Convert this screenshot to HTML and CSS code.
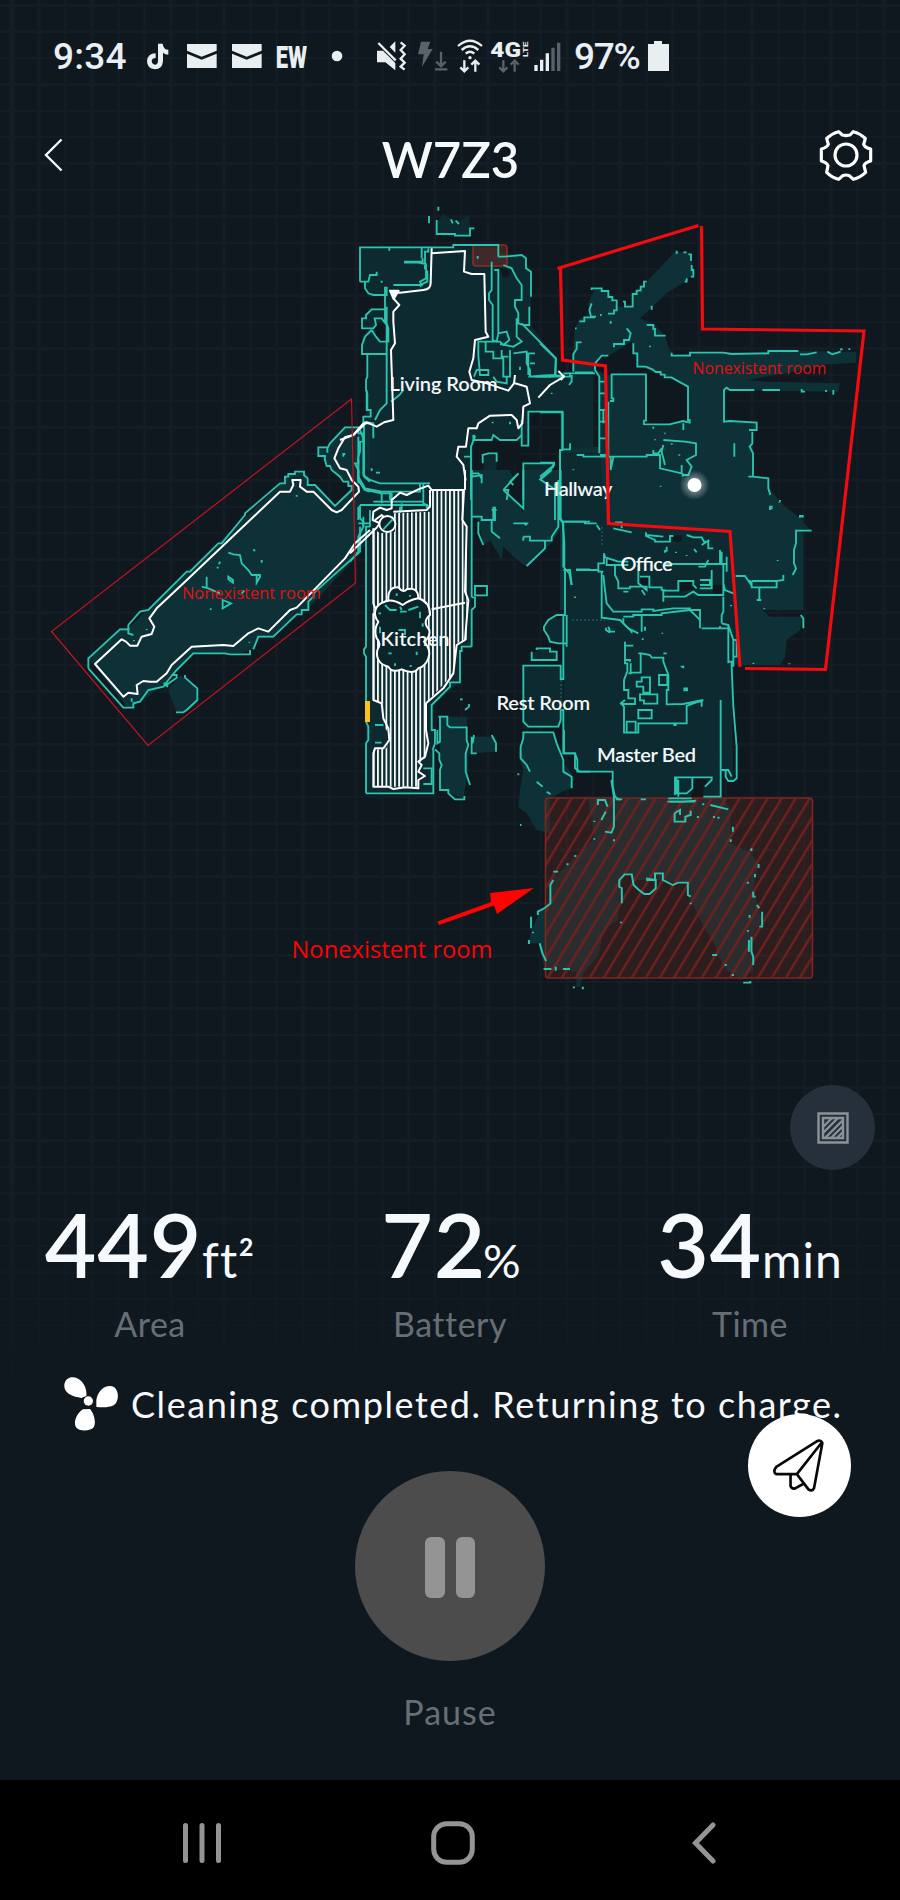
FILE: index.html
```html
<!DOCTYPE html>
<html lang="en">
<head>
<meta charset="utf-8">
<title>W7Z3</title>
<link rel="stylesheet" href="styles.css">
</head>
<body>
<div class="app">
  <div class="statusbar">
    <span class="clock">9:34</span>
    <svg class="notif" viewBox="420 90 630 150">
      <g class="lit">
        <path d="M474 128h14q2 18 17 18v15q-10 0-16-6v26q-2 24-24 24-24-2-24-25 2-22 26-23v14q-11 0-12 10 1 9 10 10 9-1 9-12z"/>
        <path d="M561 129h89v20l-45 18-44-18zM561 158l44 18 45-18v43h-89z"/>
        <path d="M696 129h89v20l-45 18-44-18zM696 158l44 18 45-18v43h-89z"/>
        <text class="ew" x="827" y="200" textLength="94" lengthAdjust="spacingAndGlyphs">EW</text>
        <circle cx="1011" cy="165" r="16"/>
      </g>
    </svg>
    <svg class="radio" viewBox="1120 90 600 150">
      <g class="lit">
        <path d="M1132 149h18l37 37v22l-30-24h-25zM1187 121v34l-17-17z"/>
        <path class="lit-line" d="M1136 126l52 52M1203 124l12 10-12 13 12 13-12 13 12 12-12 12 12 9"/>
      </g>
      <path class="dim" d="M1264 122h28l-8 22h15l-32 54 5-38h-17z"/>
      <path class="dim-line" d="M1324 152v44M1310 182l14 14 14-14M1306 205h37"/>
      <path class="lit-line" d="M1375 135q36-32 72 0M1386 147q25-22 50 0M1398 158q13-11 26 0M1394 178v32M1382 199l12 12 12-12M1427 212v-32M1415 191l12-12 12 12"/>
      <circle class="lit" cx="1411" cy="170" r="5"/>
      <text class="net" x="1472" y="167" textLength="92" lengthAdjust="spacingAndGlyphs">4G</text>
      <text class="lte" transform="translate(1584 168) rotate(-90)" textLength="46" lengthAdjust="spacingAndGlyphs">LTE</text>
      <path class="dim-line" d="M1511 178v32M1499 199l12 12 12-12M1545 212v-32M1533 191l12-12 12 12"/>
      <path class="lit" d="M1604 192h10v18h-10zM1621 176h10v34h-10zM1638 157h10v53h-10z"/>
      <path class="dim" d="M1655 140h10v70h-10zM1672 125h10v85h-10z"/>
    </svg>
    <span class="percent">97%</span>
    <svg class="battery" viewBox="0 0 21 30"><path class="lit" d="M6 0h8v3h7v27H0V3h6z"/></svg>
  </div>

  <header class="header">
    <svg class="back" viewBox="0 0 20 34"><path d="M17.500 1.500 2 17l15.500 15.500"/></svg>
    <h1 class="title">W7Z3</h1>
    <svg class="gear" viewBox="1107 387 162 162"><path d="M1188 410 1200 408 1210 398Q1230 403 1246 418L1241 436Q1245 446 1262 450V486Q1245 490 1242 500L1247 520Q1230 536 1210 541L1198 530Q1188 526 1178 530L1166 541Q1146 536 1130 520L1134 500Q1130 490 1114 486V450Q1130 446 1135 436L1130 418Q1146 403 1166 398L1177 408Z"/><circle cx="1188" cy="468" r="33"/></svg>
  </header>

  <svg class="map" viewBox="0 200 900 860">
    <defs>
      <pattern id="sweep" width="12.7" height="20" patternUnits="userSpaceOnUse" x="5"><rect width="5.4" height="20" fill="#f4fafa"/></pattern>
      <pattern id="hatch" width="12" height="20" patternUnits="userSpaceOnUse" patternTransform="rotate(31)"><rect width="2.4" height="20" fill="#70211f"/></pattern>
      <radialGradient id="glow"><stop offset=".4" stop-color="#fff" stop-opacity=".4"/><stop offset="1" stop-color="#fff" stop-opacity="0"/></radialGradient>
    </defs>

    <!-- floor areas -->
    <g class="floor-a" transform="translate(340 190) scale(.33333)">
      <path d="M290 132V105L308 70 320 80 360 92 388 72 392 136H345Z"/>
      <path d="M60 172H475V190L500 190 545 195 573 245V350L568 400 648 505V555L690 545 760 545V880H660V665H565V767H545V740L400 750 393 780V930H150L120 905 75 895 50 860 0 780V725L20 710 70 705V680L82 660V495H66V440L90 415H66V385L95 355H135V315H85L75 275H60Z"/>
      <path d="M390 760H470V850L500 930H390ZM550 820H640L600 868 640 895V930H550Z"/>
      <path class="void" d="M105 400H135L145 420V458H120L108 440ZM480 235L515 238 505 262 488 262ZM412 540H445V560H420ZM400 752H540V820H475V795H430V850H400Z"/>
    </g>
    <g class="floor-b" transform="translate(540 210) scale(.33333)">
      <path d="M100 485V400L105 355 120 325 150 320 145 280 165 235 205 245 230 290H280V250L320 215 405 125 450 130 460 190 435 215 380 250 300 325 345 345 375 378 385 410 400 435 450 430 770 423 948 425V458L830 465 780 482 620 510 680 515 900 520 895 545 555 540 550 635 650 638V660L637 665 640 800 685 805 690 850 720 880 790 930V1200H60V720L175 710V485Z"/>
      <path class="void" d="M200 440L275 395 295 470 345 485 445 530V635L390 640 312 650 318 495H205L165 480 180 440Z"/>
    </g>
    <g class="floor-a" transform="translate(550 500) scale(.33333)">
      <path class="floor-b" d="M170 -60H640L690 5 785 92H738L735 210 690 240H600L625 320 660 350 755 350 750 390 710 420 705 470 690 495H570Z"/>
      <path d="M25 -140H150L170 70 540 95 570 490 545 500 550 840H530L515 820V890H195L185 815H80L78 762H42V210L38 130Z"/>
      <path d="M0 355H50V430L0 430ZM0 690L20 720 40 800 65 865 0 880Z"/>
      <path class="void" d="M165 170L205 185 175 195ZM390 240H430L445 265 390 275ZM488 255H525V285H490ZM270 230L298 232V262L275 265ZM430 832H485L460 860V895H425ZM365 108L395 105 395 125H370Z"/>
    </g>
    <g class="floor-b" transform="translate(40 380) scale(.33333)">
      <path d="M145 835L240 745H265L330 680 735 300V285L800 280V310L825 315 885 380 935 325 870 260 835 225 840 200 860 205 915 140H960L990 130V440L960 520 800 690 770 705 700 775H655L640 805 600 820H460L385 900 310 960 265 985Z"/>
      <path d="M385 930L420 885 470 925V970L440 995 410 998Z"/>
    </g>
    <g class="floor-a" transform="translate(350 470) scale(.33333)">
      <path d="M20 0H365V530H330V635L250 705V970H48V170H20Z"/>
      <path class="floor-b" d="M270 740H350L355 900 340 985 270 960ZM370 800H430L438 845 370 850ZM365 0H480L520 100V0H635V170L610 210 585 240 530 290 490 260 460 230 455 270 420 210 400 225 385 150 365 140Z"/>
      <path d="M585 470L600 450H650V520H600ZM545 545H560V535H600L620 550V570H545ZM520 590H640V760L600 775H520Z"/>
      <path class="floor-b" d="M520 790H605L640 880 665 910V950L600 985V1090L560 1080 530 1030 505 1010 510 960 520 900 505 850Z"/>
      <path class="void" d="M460 60L500 10 520 0V130L510 100Z"/>
    </g>
    <g class="floor-b" transform="translate(280 780) scale(.35714 .33333)">
      <path d="M862 53H1240L1262 90 1262 190 1315 215 1340 250 1325 330 1350 420 1320 470 1325 570 1290 600 1245 565 1145 350 1140 310 1050 300 955 300 950 430 905 450 895 520 850 580 840 620 830 620 830 575 740 565 725 490 695 490 705 450 725 400 755 370 762 300 880 175Z"/>
      <path class="void" d="M945 420L955 290 980 285 1005 340 1040 310 1145 320 1150 375 1220 500 1240 600H850L890 540 905 450Z"/>
    </g>

    <!-- no-go zones -->
    <rect x="545.5" y="798" width="267" height="180" rx="3" fill="#57251f" fill-opacity=".4"/>
    <rect x="545.5" y="798" width="267" height="180" rx="3" fill="url(#hatch)" stroke="#80251f" stroke-width="1.600"/>
    <rect x="473" y="245" width="34" height="21" rx="3" fill="#602a26" fill-opacity=".6" stroke="#8e2c20" stroke-width="1.500"/>

    <!-- detected walls -->
    <g class="wall" transform="translate(340 190) scale(.33333)">
      <path d="M290 90V132H345V137H390V115H403M267 78v22M295 50v12M333 88l5 12M347 92l10 10M413 198v8"/>
      <path d="M60 275V172H340V165H475V200M60 275H85L90 255H110V245M75 275V295L85 310 100 315H140V290M148 172v10M125 272v6"/>
      <path d="M245 172V205M248 205V215H195V218H235L258 222V265L240 275 245 285H160M265 175V185H255V235L262 245V275L250 280 240 290"/>
      <path d="M135 358H95L78 375V385H66V415H100L108 405 104 385H125L135 398V290M95 420L75 440 66 465V492H140V350M95 420L108 440 120 455H145V415L140 400M82 495V560L78 570V600L82 610V660H92V680H70V695L100 700V745M140 495V640L120 660 105 690M190 600l-12 15-25 20"/>
      <path d="M475 200H495L545 195 558 205V235L573 245V320M490 225L515 235 530 265 545 285V330H525V350L535 370V400L550 405H568V350M455 215V300L447 310V330L458 345V450L470 455 475 430M463 240H475V430L500 425 508 450 490 465 480 455H415V495L420 555H445V540H410L402 560M437 455V485H460V505H490V560H500V580L470 575 460 560M510 480V560H490M485 480V500H505M545 400L648 505 645 555 565 560M530 385V440L545 455 520 470 480 462M520 490L560 485V520L570 540V560H640M585 490H565V555M585 520H570M540 530v10"/>
      <path d="M400 735V750H455L460 735 480 750H530L545 735V767H565V665H667V780H660V930M545 690V740M458 695v5M510 695v8M585 560H690V548"/>
      <path d="M428 820V795L445 790H470V815M372 800H393V770L405 740 400 735M393 800V930M395 850H415L425 865M640 820H550V930M640 820V830L600 868 640 895M490 900H505L500 930M535 850L510 875 520 885M95 835v8M108 848h12"/>
      <path d="M70 745V855L90 870 120 880H270M55 740V860L75 895 125 905H150V930M60 720L70 745M125 905H240V880"/>
    </g>
    <g class="wall" transform="translate(540 210) scale(.33333)">
      <path d="M410 122v10M430 127h10M445 133h8v20M455 165v15h5v20h-8M440 205v10h-6M320 215h-8v15h-10v12h-12v10h-12v38H255v-15h-6M155 240v-5h30v8h20v18h12v10h13v30h-8v10h-18M155 280l-7 20 5 20h15M165 322h-32v12h-15M180 315h5M212 333v8M335 287v12M105 355h5M320 345h20v12h5v20h32M260 355l12 15-5 20h-15v12h-30v10M125 397h-15v20l-10 15v53M280 400v30h12v40h25l20 8 10 8h15v8h12v8h20l50 28v100h5v8l-20-5-40 10H312V632h6V493H215V565h5v8h-10"/>
      <path d="M205 437H185L165 460V480L178 500V730M70 490H165M105 487H160M95 495V515l-8 10M180 515H200M180 550H200M180 600H200M180 635H200M180 685H200M180 735H200M190 600V640M205 740V575"/>
      <path d="M395 428V437H450V428H550L575 432 685 430V423H775M780 433H800L830 427M862 425l15 8 25-8M900 418h8M928 415v5M643 540H570l-10-7-8 7V635L570 633 650 638V660H627M667 540H720M785 537v8h10M858 540v6M880 540v14"/>
      <path d="M637 665V700l-8 10 10 20v70H625M640 800L685 805V835l6 20M583 700V740M690 900v-10h8M718 875v3M780 915v8M330 407v5M110 735H130V740H320V735H360V775L425 790V765M212 742v38l8-38M340 720v10h15l10-15M370 705L365 725 375 765M370 690L435 695 468 700V735L440 750 455 770 445 795H430M428 800v-10M375 668v3M345 688v3M395 700v4M418 733v4M362 827v3M100 778v3M430 640v20M340 650v6M0 607H68V718H90V700M60 720V930M35 548v4"/>
      <path d="M0 497H75M0 400L47 445V497M0 758H42V765L0 800M45 820V930"/>
    </g>
    <g class="wall" transform="translate(40 380) scale(.33333)">
      <path d="M145 865V835L240 748H265V735L300 695 325 690 440 575H450L535 490H545L615 405V400L720 310H735V290H745V282H765V275H792V285L803 295V315H825L885 378 935 330V318H925V305H910L900 290 875 270 870 258H860L855 240V228H835V202H862V218M862 205L870 190 915 142H955V160H970V185H960V215L955 230V250H945L955 270V310"/>
      <path d="M145 865L250 983H280V970L300 965 325 930 370 920 385 900 410 870 460 820H555L570 823H630V810M640 808L655 770H700L770 703H785V690H805V665L820 650V640L960 515V440"/>
      <path d="M265 745V760L280 765M320 747v3M282 780v4M435 885V893L472 925V960L440 990 430 997H408M395 885h15v8l-35 25M370 910h12v12M275 955v10"/>
      <path d="M565 518L580 523 600 525 605 550 625 570 635 585H660V590L650 608V583M485 620L505 625 540 640M500 590V625M565 590l14 10v8l-14-10zM640 508l5 5M540 545l-3 8M530 563h6M665 540v8M548 660l25 10-25 15zM512 685v5M605 640l8-8M770 345v5M910 230v-8h6M483 650v4M628 785v3"/>
      <path d="M980 30V90H990M972 130V290L990 305M955 240V300L975 330 990 335M955 380V420M960 375H990M970 410V440"/>
    </g>
    <g class="wall" transform="translate(350 470) scale(.33333)">
      <path d="M48 970V820L55 810V770L48 755V560L42 550V538L48 530V170H60M48 970H250V840M365 0V382M365 530H335V543H330V637H300V650L245 705V780H255V820L248 840M365 382H375V410L365 420V530"/>
      <path d="M25 0V30L45 60 95 70V100M95 70H125V100M30 105H230V115M30 105V145L40 155V170L25 200V245L0 275M60 120V170M25 160H60M70 95H220M155 100V120M95 170L130 140M150 128V110M220 40V100L240 110"/>
      <path d="M365 0V20L395 15V40M365 140H395V150H435V110M430 110V150M425 120H440M385 155V190L400 225M425 150V185L450 205M460 60L505 10M460 60L520 115V0M490 160H535M520 158l10 8M520 200H540V212H605V200L625 170V30M520 200V212M585 212V235L530 288M375 348h36v28h-36zM570 30L605 0"/>
      <path d="M632 0V150L640 160V290L658 310 665 345M640 155H720M678 298H720M640 300H655M645 300V435H620L595 450 582 470V480L595 500 600 515 625 520H650V440M640 435V530M545 570V545M560 540V535H600V545H620V570H542M675 380v3M650 435V530"/>
      <path d="M520 640V587H632V627H640V530M520 590V755L535 770H625L632 750V720H640V850H675V895L690 905H720"/>
      <path d="M520 805V787H610L620 820 640 870V905L665 920V955M520 805L512 830V865L530 885 540 905M505 910v6M560 935l18 15M590 965l12 8"/>
      <path d="M270 740V815L262 820V780M265 740H292V765L300 772H350V810L355 825 347 850V905L360 945M255 838L268 850V870L275 885 270 900V960H295V970L315 988H343V978M365 800V850H380M372 795L368 820M425 795L438 820V845M330 688h8M345 720l12-10v-8M75 765H100M75 818H95M220 895H245V942H220"/>
    </g>
    <g class="wall" transform="translate(550 500) scale(.33333)">
      <path d="M27 0V50L38 65 43 130V200M38 65H105V70H140M140 75L150 90M190 85L245 97M195 67H215V85M42 210H60L65 255M78 210H145M75 290v3"/>
      <path d="M288 97V108L315 120V125H360V108H370M288 105L340 110M410 105L430 112H455L462 125H475V145H490M455 135L478 120M345 150v8M378 155v4M410 165v3M432 147l8 10M510 150V190L520 195V250M515 155V190M530 170V215M350 155V140"/>
      <path d="M155 215V353L210 360 235 385 265 400M162 160V190H145V215H160M162 160L165 172 190 180 205 185H235M345 192H530M170 172V195H235M195 195V225L205 245V265H240V260H290V270L265 250V195M270 230H298V262H335V270L350 272H385V243H430V255L440 265M475 180L465 200H445M450 240H480V255H450M450 265H485V210M220 275H235M275 270L285 285M340 270V305V290H405L430 275 445 285H485M485 285H520V250L525 270 550 280M520 290V335L515 345V370"/>
      <path d="M160 225L165 270 170 310 190 335H275V328H310V333L370 325H420V330H450V385M455 385H535V375L515 370M275 395V345H335V340L420 330 440 350 450 360M220 350H250V345H275M220 355V370L245 395V400M285 380V392M175 380L180 395H195M168 383V390L180 398M510 378V385H535V485H545V500L550 620 560 740V835L550 843H535L527 830V810M535 375L550 420V500M550 420H560V470H550M535 440V490M278 415v5M337 398v3"/>
      <path d="M225 425V490H232V515L222 540V570H235V595H255V612L215 612 222 620V698H265V670H410V618L445 605H455V620M225 437H250M225 480H240V485M265 460H275L300 465 305 473H340V485L355 525V570H350V613L400 612 460 600M272 460V518H242V490M235 520H245M340 460h10M300 532H275V545H260V560H280V578H300zM327 525h25v30h-25zM270 583h52v28h-40v-10H270zM265 630h40v25h-40zM230 665h27v32h-27zM210 612L225 600M370 675h10"/>
      <path d="M392 500h8v5M403 565h8v6h-8zM512 600V890H460M375 885V832H485V840L465 860M380 832V880H410L427 865V835M515 810H535L545 830M385 840V890M355 895H425M360 905h75M42 690V760H75L82 780V815H188V860L195 890 210 900"/>
      <path d="M557 228H585L600 250V240M605 243H680M605 243V262H680V243L700 240V225M628 262V300M620 300h14M785 92H738V130L732 150V190L738 205 728 225M752 345L760 355V385M660 30v-5h8M690 0v5M750 48h8v5M683 180v3M643 325v3M718 490v3M543 315v4M610 488v4"/>
    </g>
    <g class="wall" transform="translate(280 780) scale(.35714 .33333)">
      <path d="M890 75V60H910L917 80M912 95L900 120M928 0L935 50V140L928 158 910 155M940 58h18M1010 58h15M1085 65H1130L1165 62M1105 100L1120 90V105M1105 100V125H1135V110L1150 105V92M1205 75L1255 88M1185 70v6M1170 108v6M1215 108v6M1228 110v6M1268 140v15M1262 178v8M1320 205v8M1340 252v12M1330 282v10M1310 305v6M1325 335V350H1332M1335 375L1342 385M1350 395V440H1342M1315 405v8M1310 450v5M1320 470V515L1325 530V555M1313 480V515M1297 608H1317V603M1265 585h6M1245 555h6M1210 525h14M1150 368v5"/>
      <path d="M957 370V325L950 320V300L965 283H985L990 315 1005 330 1020 342H1035L1052 325V300H1025M1025 295L1050 300V280H1072V300L1100 315 1115 308H1142V345L1150 350M955 425v5M935 178v6M880 175v4M880 122v4M827 225v6M805 250v6M765 275h14M765 300L757 315V370L740 385 722 395V405M703 410v35M708 455v5M697 480v12M727 490L735 520 745 543M738 567H760M772 560v12M792 567h20M820 622h6M848 620v8M672 135h4"/>
    </g>
    <path class="divider" d="M602 527v20M572 620h33M561 680v30"/>

    <!-- kitchen coverage -->
    <g transform="translate(350 470) scale(.33333)">
      <path fill="url(#sweep)" d="M70 175L90 190 135 185 130 130 240 125 245 62H340V150L350 170V510L320 520 310 610 230 698V860L205 880V950H70V840L110 835 118 790 100 770 98 700 70 690Z"/>
      <path class="trail" d="M70 175V400L78 420M70 430V690L95 700 100 745 115 775 118 810 100 835H75L70 850V950H115L130 957 165 952 205 955V930L225 918 205 905 215 885 205 875 225 860 235 820 228 780V700L280 655 310 610 320 525 345 510 355 390 345 365 350 170 337 150 342 60H245L235 47 205 58 170 75 150 68 125 90V115L110 120 90 113 70 125 68 150 90 160 78 175 0 250M130 125L230 120 240 110V60M245 418L345 398M345 0V60M75 150L95 135 110 150"/>
      <path class="trail coverage-gap" d="M75 430Q75 400 115 392 112 350 145 352 160 370 170 358 205 350 205 385 240 395 240 435 215 455 238 480 242 500 222 515 245 540 235 565 225 590 205 595 190 615 155 598 125 610 115 590 75 580 82 540 95 520 80 505 70 480 85 455 75 445 75 430Z"/>
      <circle class="trail coverage-gap" cx="112" cy="162" r="24"/>
      <path class="trail" d="M115 392Q135 390 158 405 178 390 205 385"/>
      <path class="wall" d="M100 178L128 148M105 405L120 420H140M175 420L205 410M150 425H170M90 470V490M145 480H165V495M210 425v20M115 550h10M200 545v10M180 375v5M140 370v8M135 580v8M182 585v6M85 430h8M218 460v10M150 410l5 10"/>
      <rect x="45" y="693" width="15" height="63" fill="#fbc21e"/>
    </g>

    <!-- driven route -->
    <g class="trail" transform="translate(340 190) scale(.33333)">
      <path d="M150 305L180 308 250 300Q272 298 272 280L275 175M275 190L375 183 372 245 395 252H433L437 425 445 440 405 450 400 505 388 545 395 570 440 580 505 602 522 580 525 555M525 580L560 590 570 640 550 650 547 700 535 715 530 690 515 675 450 677 415 700 410 715 385 715 378 770H355L350 800 370 825 377 872M160 325L178 345 160 365V395L165 460 153 480 160 690 132 697 110 710 80 697 40 735 0 750M595 623L630 585 672 560 655 543M672 560L662 570"/>
      <path fill="#fff" d="M150 302h26l-15 25z"/>
    </g>
    <g class="trail" transform="translate(40 380) scale(.33333)">
      <path d="M990 450L945 490 915 535 770 683 750 690 685 755 655 745 625 760 580 798 550 795 455 800 395 855 380 880 350 905H330L310 903 290 915 293 942 265 938 250 950 165 852 245 778 258 785 270 797H292L305 770 335 762 343 740 328 715 350 685 435 605 720 335H750L760 315 757 300H782L780 320 800 335H820L875 390 890 397 905 390 957 335 955 320 935 300 920 270 900 265 883 235 895 205 915 172 940 165 970 130H990"/>
    </g>

    <!-- robot -->
    <circle cx="694.5" cy="485" r="15" fill="url(#glow)"/>
    <circle cx="694.5" cy="485" r="7" fill="#fff"/>

    <g class="room">
      <text x="389.500" y="390.500" textLength="108">Living Room</text>
      <text x="544" y="495.500" textLength="68.500">Hallway</text>
      <text x="620.500" y="571" textLength="52">Office</text>
      <text x="380.500" y="646" textLength="69">Kitchen</text>
      <text x="496.500" y="709.500" textLength="93.500">Rest Room</text>
      <text x="597" y="762" textLength="99">Master Bed</text>
    </g>

    <!-- user annotations -->
    <path class="mark" d="M557.500 268.500 698.500 225.500M701.500 226 702.500 329 864 331 825.500 669.500 745 668.500M560.500 268 562.500 360 605.500 366 608.500 523.500 730 531.500 740 667"/>
    <path class="mark-thin" d="M351.500 399 51.500 631.500 148 745.500 355.500 583Z"/>
    <path fill="#ff0303" d="M437.500 921.500 491 902 490 893 534 888 497 914 494 905.500 439 925Z"/>
    <g class="note">
      <text class="note-small" x="182" y="599" textLength="139" lengthAdjust="spacingAndGlyphs">Nonexistent room</text>
      <text class="note-small" x="692.500" y="374" textLength="134" lengthAdjust="spacingAndGlyphs">Nonexistent room</text>
      <text class="note-big" x="291.500" y="957.500" textLength="201" lengthAdjust="spacingAndGlyphs">Nonexistent room</text>
    </g>
  </svg>

  <div class="tools">
    <button class="zone-btn" aria-label="Zones">
      <svg viewBox="0 0 32 32"><path d="M1.500 1.500h29v29h-29z"/><path d="M6 6h20v20H6z"/><path d="M6 15 15 6M6 21 21 6M8 26 26 8M14 26 26 14M20 26l6-6"/></svg>
    </button>
  </div>

  <section class="stats">
    <div class="stat"><div class="value">449<span class="unit">ft²</span></div><div class="label">Area</div></div>
    <div class="stat"><div class="value">72<span class="unit percent-unit">%</span></div><div class="label">Battery</div></div>
    <div class="stat"><div class="value">34<span class="unit">min</span></div><div class="label">Time</div></div>
  </section>

  <div class="message">
    <svg class="fan" viewBox="188 588 168 168"><path d="M258 648C262 615 236 588 212 592 192 596 185 622 200 637 212 650 235 652 243 654ZM288 659C296 622 325 612 342 622 358 636 355 665 340 676 325 684 305 682 288 681ZM248 688 269 687C280 700 288 725 281 740 272 754 238 756 227 742 217 725 232 697 248 688Z"/><circle cx="264" cy="663" r="14"/></svg>
    <span class="message-text">Cleaning completed. Returning to charge.</span>
    <button class="send" aria-label="Send">
      <svg viewBox="960 1130 170 172"><path d="M1117 1148Q1112 1137 1100 1143L978 1220Q966 1235 978 1242L1040 1242 1075 1288Q1086 1296 1092 1284ZM1114 1148 1040 1242M1021 1244V1278Q1025 1288 1035 1285L1060 1271"/></svg>
    </button>
  </div>

  <div class="control">
    <button class="pause" aria-label="Pause"><span class="bar"></span><span class="bar"></span></button>
    <div class="label pause-label">Pause</div>
  </div>

  <nav class="navbar">
    <svg viewBox="0 0 40 44"><path d="M3.500 4.500v35M20 4.500v35M36.500 4.500v35"/></svg>
    <svg class="nav-home" viewBox="0 0 44 44"><rect x="2.700" y="2.700" width="38.600" height="38.600" rx="13"/></svg>
    <svg class="nav-back" viewBox="0 0 24 44"><path d="M21 4 3.500 22 21 40"/></svg>
  </nav>
</div>
</body>
</html>
```

FILE: styles.css
```css
* { box-sizing: border-box; }
body { margin: 0; background: #10181f; }
button { border: 0; padding: 0; font: inherit; }
h1 { margin: 0; }

.app {
  position: relative;
  width: 900px;
  height: 1900px;
  display: flex;
  flex-direction: column;
  overflow: hidden;
  font-family: Lato, "Liberation Sans", sans-serif;
  color: #f7fafd;
  background: #10181f;
}
.app::before {
  content: "";
  position: absolute;
  inset: 0;
  background:
    repeating-linear-gradient(90deg, #18222b 0 2.500px, transparent 2.500px 26.400px) 11.500px 0,
    repeating-linear-gradient(180deg, #18222b 0 2.500px, transparent 2.500px 26.400px) 0 4px;
  opacity: .5;
  mask-image: linear-gradient(#000 0 1180px, transparent 1420px);
}
.app > * { position: relative; flex: none; }

.statusbar {
  height: 110px;
  padding: 31px 0 29px 53px;
  display: flex;
  align-items: center;
  font-family: Roboto, sans-serif;
  font-weight: 500;
  font-size: 37px;
  color: #e9eff2;
}
.clock { width: 87px; letter-spacing: .2px; }
.notif { width: 210px; height: 50px; }
.radio { width: 200px; height: 50px; margin-left: 23px; }
.percent { width: 75px; padding-left: 1px; letter-spacing: -1.300px; }
.battery { width: 21px; height: 30px; }
.lit { fill: #e9eef0; }
.dim { fill: #59616a; }
.lit-line { fill: none; stroke: #e9eef0; stroke-width: 7; }
.dim-line { fill: none; stroke: #59616a; stroke-width: 7; }
.ew { font: 900 96px Roboto, sans-serif; }
.net { font: 900 62px Roboto, sans-serif; fill: #e9eef0; }
.lte { font: 700 23px Roboto, sans-serif; fill: #e9eef0; }

.header {
  height: 90px;
  padding: 0 27px 0 44px;
  display: flex;
  align-items: center;
  justify-content: space-between;
}
.back { width: 20px; height: 34px; margin-right: 18px; fill: none; stroke: #f4f8fb; stroke-width: 2.400; }
.title { font-size: 49px; line-height: 60px; font-weight: 600; padding-top: 8px; letter-spacing: 0; }
.gear { width: 54px; height: 54px; fill: none; stroke: #fff; stroke-width: 9.500; stroke-linejoin: round; }

.map { display: block; width: 900px; height: 860px; }
.floor-a { fill: #0d2a31; }
.floor-b { fill: #0e3137; }
.void { fill: #0f181f; }
.wall { fill: none; stroke: #2bc4ae; stroke-width: 5.600; }
.trail { fill: none; stroke: #fff; stroke-width: 6; stroke-linejoin: round; }
.coverage-gap { fill: #0b2429; }
.divider { fill: none; stroke: #276c6c; stroke-width: 1; stroke-dasharray: 2 2; }
.room { font-size: 20px; font-weight: 600; fill: #f2f7f8; }
.mark { fill: none; stroke: #f30b10; stroke-width: 3.200; }
.mark-thin { fill: none; stroke: #c4131d; stroke-width: 1.200; }
.note { font-family: "Open Sans", sans-serif; fill: #e50d12; }
.note-small { font-size: 17px; }
.note-big { font-size: 24px; fill: #fa0306; }

.tools { height: 130px; padding: 25px 25px 0 0; display: flex; justify-content: flex-end; }
.zone-btn {
  width: 85px;
  height: 85px;
  border-radius: 50%;
  background: #25303b;
  display: flex;
  align-items: center;
  justify-content: center;
}
.zone-btn svg { width: 32px; height: 32px; fill: none; stroke: #8b9299; stroke-width: 2.400; }

.stats { display: grid; grid-template-columns: repeat(3, 1fr); padding-top: 9px; text-align: center; }
.value { font-size: 89px; line-height: 89px; font-weight: 600; letter-spacing: .8px; white-space: nowrap; }
.unit { font-size: 48px; line-height: 1; font-weight: 400; letter-spacing: 1px; }
.percent-unit { font-size: 47px; margin-left: -3px; letter-spacing: -2px; }
.label { margin-top: 16px; font-size: 34px; line-height: 40px; color: #686e76; letter-spacing: .5px; }

.message { display: flex; align-items: center; height: 56px; margin-top: 32px; padding-left: 63px; z-index: 2; }
.fan { width: 56px; height: 56px; fill: #fff; }
.message-text { margin-left: 12px; font-size: 36px; line-height: 44px; letter-spacing: 1.550px; white-space: nowrap; color: #f6f9fb; }
.send {
  position: absolute;
  left: 748px;
  top: 38px;
  width: 103px;
  height: 103px;
  border-radius: 50%;
  background: #fff;
  display: flex;
  align-items: center;
  justify-content: center;
}
.send svg { width: 57px; height: 57px; margin-left: -3px; fill: none; stroke: #080808; stroke-width: 8; stroke-linejoin: round; stroke-linecap: round; }

.control { display: flex; flex-direction: column; align-items: center; margin-top: 39px; }
.pause {
  width: 190px;
  height: 190px;
  border-radius: 50%;
  background: #4c4c4c;
  display: flex;
  align-items: center;
  justify-content: center;
  gap: 11px;
}
.bar { width: 19.500px; height: 61px; border-radius: 6px; background: #949494; margin-top: 2px; }
.pause-label { margin-top: 31px; letter-spacing: 1px; }

.navbar {
  margin-top: auto;
  height: 120px;
  padding: 5px 184px 0 181.500px;
  background: #000;
  display: flex;
  align-items: center;
  justify-content: space-between;
}
.navbar svg { height: 44px; fill: none; stroke: #949494; stroke-width: 5; stroke-linecap: round; }
.navbar .nav-home { margin-right: 7px; }
```
